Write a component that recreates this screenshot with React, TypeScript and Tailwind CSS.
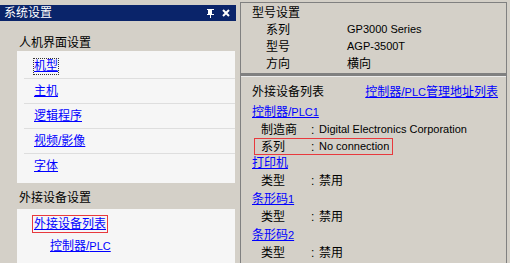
import type { ReactNode } from 'react';

const font = "font-['Liberation_Sans','Noto_Sans_CJK_SC',sans-serif]";

function PinIcon() {
  return (
    <svg width="7" height="9" viewBox="0 0 7 9" className="block">
      <rect x="0" y="0" width="7" height="1" fill="#fff" />
      <rect x="1" y="1" width="1" height="4" fill="#fff" />
      <rect x="2" y="1" width="3" height="4" fill="#fff" />
      <rect x="0" y="5" width="7" height="1" fill="#fff" />
      <rect x="3" y="6" width="1" height="3" fill="#fff" />
    </svg>
  );
}

function CloseIcon() {
  return (
    <svg width="8" height="8" viewBox="0 0 8 8" className="block">
      <path d="M1 1 L7 7 M7 1 L1 7" stroke="#fff" strokeWidth="2" />
    </svg>
  );
}

function NavLink({ children, focused }: { children: ReactNode; focused?: boolean }) {
  return (
    <span
      className={
        focused
          ? 'text-[#0000ff] underline outline outline-1 outline-dotted outline-[#333] leading-[15px] whitespace-nowrap'
          : 'text-[#0000ff] underline leading-[15px] whitespace-nowrap'
      }
    >
      {children}
    </span>
  );
}

function InfoRow({ label, value, boxed }: { label: string; value: string; boxed?: boolean }) {
  return (
    <div
      className={
        boxed
          ? 'ml-[2px] w-[139px] h-[17px] flex items-center pl-[6px] border border-[#e8393d]'
          : 'ml-[2px] w-[139px] h-[17px] flex items-center pl-[6px] border border-transparent'
      }
    >
      <span className="w-[50px] shrink-0">{label}</span>
      <span className="w-[8px] shrink-0">:</span>
      <span className={/^[\x00-\x7f]+$/.test(value) ? 'text-[11px] whitespace-nowrap' : 'whitespace-nowrap'}>{value}</span>
    </div>
  );
}

export default function App() {
  const hmiItems = ['机型', '主机', '逻辑程序', '视频/影像', '字体'];

  return (
    <div className={`w-[510px] h-[263px] overflow-hidden bg-[#d4d0c8] flex text-[12px] text-black ${font}`}>
      {/* Left: system settings panel */}
      <div className="w-[240px] shrink-0 flex flex-col pt-[5px]">
        <div className="mr-[4px] h-[16px] bg-[#0a246a] flex items-center pl-[4px] pr-[6px] text-white">
          <span className="flex-1 leading-[16px]">系统设置</span>
          <div className="flex items-center gap-[8px]">
            <PinIcon />
            <CloseIcon />
          </div>
        </div>

        <div className="pl-[17px] pr-[5px]">
          <div className="mt-[14px] h-[16px] leading-[16px] pl-[2px]">人机界面设置</div>
          <div className="bg-[#f6f6f6] pt-[3px] pb-[4px]">
            {hmiItems.map((item, i) => (
              <div
                key={item}
                className={
                  i < hmiItems.length - 1
                    ? 'ml-[7px] h-[25px] flex items-center pl-[10px] border-b border-[#dedede]'
                    : 'ml-[7px] h-[25px] flex items-center pl-[10px]'
                }
              >
                <NavLink focused={i === 0}>{item}</NavLink>
              </div>
            ))}
          </div>

          <div className="mt-[7px] mb-[3px] h-[16px] leading-[16px] pl-[2px]">外接设备设置</div>
          <div className="bg-[#f6f6f6] h-[60px] pt-[6px]">
            <div className="ml-[15px] w-[76px] h-[18px] border border-[#e8393d] flex items-center pl-[1px]">
              <NavLink>外接设备列表</NavLink>
            </div>
            <div className="ml-[33px] mt-[5px] h-[16px] flex items-center">
              <NavLink>
                控制器/<span className="text-[11px]">PLC</span>
              </NavLink>
            </div>
          </div>
        </div>
      </div>

      {/* Right: info panel */}
      <div className="mt-[2px] w-[267px] shrink-0 border-l border-t border-r border-[#808080] flex flex-col">
        <div className="h-[70px] pl-[11px] pt-[2px]">
          <div className="h-[16px] leading-[16px]">型号设置</div>
          {[
            ['系列', 'GP3000 Series'],
            ['型号', 'AGP-3500T'],
            ['方向', '横向'],
          ].map(([k, v]) => (
            <div key={k} className="h-[17px] flex items-center">
              <span className="pl-[14px] w-[95px] shrink-0">{k}</span>
              <span className={/^[\x00-\x7f]+$/.test(v) ? 'text-[11px]' : ''}>{v}</span>
            </div>
          ))}
        </div>

        <div className="h-[3px] bg-[#808080]" />

        <div className="flex-1 pl-[11px] pt-[7px] border-t border-[#ececec]">
          <div className="h-[16px] flex items-center justify-between pr-[8px]">
            <span>外接设备列表</span>
            <NavLink>
              控制器/<span className="text-[11px]">PLC</span>管理地址列表
            </NavLink>
          </div>

          <div className="mt-[4px] h-[17px] flex items-center">
            <NavLink>
              控制器/<span className="text-[11px]">PLC1</span>
            </NavLink>
          </div>
          <InfoRow label="制造商" value="Digital Electronics Corporation" />
          <InfoRow label="系列" value="No connection" boxed />

          <div className="h-[17px] flex items-center">
            <NavLink>打印机</NavLink>
          </div>
          <InfoRow label="类型" value="禁用" />

          <div className="mt-[2px] h-[17px] flex items-center">
            <NavLink>
              条形码<span className="text-[11px]">1</span>
            </NavLink>
          </div>
          <InfoRow label="类型" value="禁用" />

          <div className="mt-[2px] h-[17px] flex items-center">
            <NavLink>
              条形码<span className="text-[11px]">2</span>
            </NavLink>
          </div>
          <InfoRow label="类型" value="禁用" />
        </div>
      </div>
    </div>
  );
}
